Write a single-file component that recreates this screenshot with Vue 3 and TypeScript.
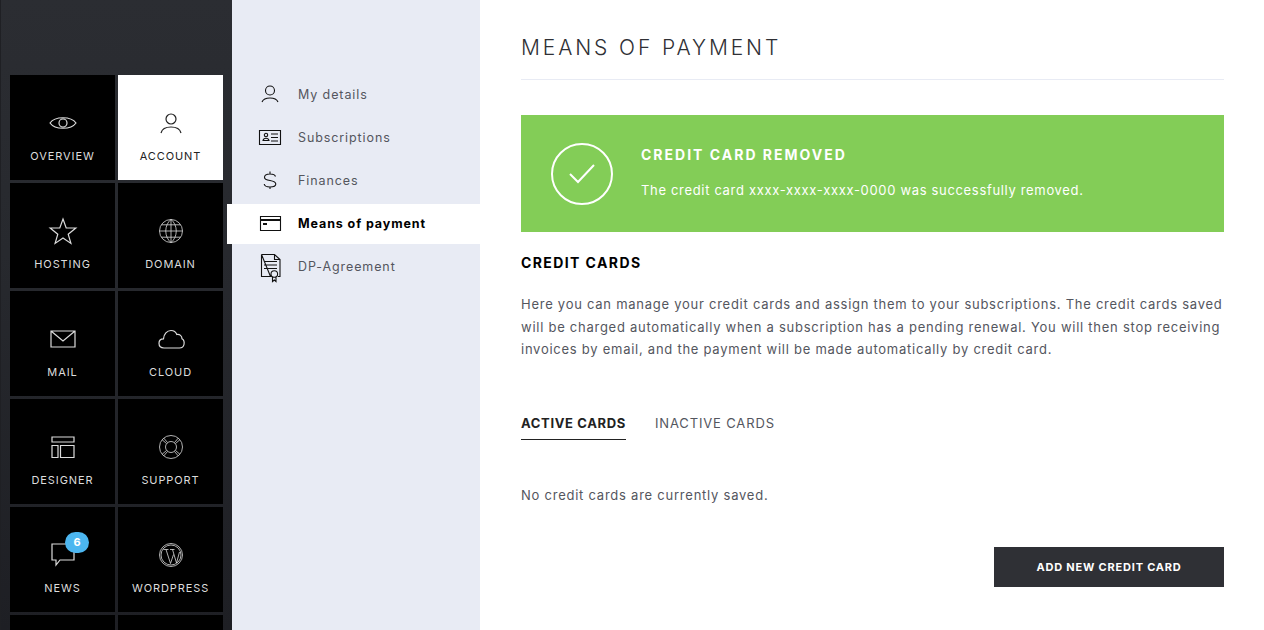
<script setup lang="ts">
type Tile = { label: string; d: string; active?: boolean; badge?: number; thin?: boolean };

const ring = "M26.5 15a11.5 11.5 0 1 1-23 0a11.5 11.5 0 1 1 23 0Z";

const tiles: Tile[] = [
  { label: "OVERVIEW", d: "M2 15C7 8 23 8 28 15C23 22 7 22 2 15ZM19 15a4 4 0 1 1-8 0a4 4 0 1 1 8 0Z" },
  { label: "ACCOUNT", active: true, d: "M20 11a5 5 0 1 1-10 0a5 5 0 1 1 10 0ZM5 25C6 21 10 19 15 19C20 19 24 21 25 25" },
  { label: "HOSTING", d: "M15 3L18.2 12H27.8L20.2 18.2L22.9 27.4L15 22L7.1 27.4L9.8 18.2L2.2 12H11.8Z" },
  { label: "DOMAIN", thin: true, d: ring + "M15 3.5V26.5M3.5 15H26.5M5.5 8.8H24.5M5.5 21.2H24.5M15 3.5C8 9 8 21 15 26.5M15 3.5C22 9 22 21 15 26.5" },
  { label: "MAIL", d: "M3 7H27V23H3ZM3 7L15 17L27 7" },
  { label: "CLOUD", d: "M8 24C5 24 3 22 3 19.300C3 16.500 5 14.800 7.500 14.800C7.800 10 11 6.500 15 6.500C18 6.500 20 8.300 20.800 10.500C23.800 10 26 12 26 14.800C28 16 28.500 18 28 20.500C27.500 22.800 25.800 24 23.500 24Z" },
  { label: "DESIGNER", d: "M4 5H26V10H4ZM4 13.500H10V25.500H4ZM12.500 13.500H26V25.500H12.500Z" },
  { label: "SUPPORT", thin: true, d: ring + "M20.500 15a5.500 5.500 0 1 1-11 0a5.500 5.500 0 1 1 11 0ZM7.800 6.200L11.500 10.500M6.200 7.800L10.500 11.500M22.200 6.200L18.500 10.500M23.800 7.800L19.500 11.500M7.800 23.800L11.500 19.500M6.200 22.200L10.500 18.500M22.200 23.800L18.500 19.500M23.800 22.200L19.500 18.500" },
  { label: "NEWS", badge: 6, d: "M4 4H26V20H12L8 25V20H4Z" },
  { label: "WORDPRESS", thin: true, d: ring + "M25 15a10 10 0 1 1-20 0a10 10 0 1 1 20 0ZM7.500 9.500H12.500M10 9.500L14.500 23.500L17.500 14.500M14 9.500H18.500M16.500 9.500L20.500 23L23.500 12" },
  { label: "", d: "" },
  { label: "", d: "" }
];

const menu = [
  { label: "My details", d: "M19.500 11.500a4.500 4.500 0 1 1-9 0a4.500 4.500 0 1 1 9 0ZM7 23C8 20.500 11 19 15 19C19 19 22 20.500 23 23" },
  { label: "Subscriptions", d: "M4.500 8.500H25.500V22.500H4.500ZM8 18.500C8.300 17 9.500 16.300 11 16.300C12.500 16.300 13.700 17 14 18.500H8ZM12.700 13a1.700 1.700 0 1 1-3.400 0a1.700 1.700 0 1 1 3.400 0ZM16 12H23M16 15.500H23M16 19H23" },
  { label: "Finances", d: "M20.500 11.500C20 9.500 18 9 15 9C12 9 9.500 10.300 9.500 12.300C9.500 14.500 12 15.200 15 15.500C18 16 20.800 17 20.800 19C20.800 21 18 22 15 22C12 22 9.500 21 9.200 19M15 6.500V9M15 22V24" },
  { label: "Means of payment", active: true, d: "M5.500 8.500H25.500V22.500H5.500ZM5.500 11.500H25.500M5.500 12.500H25.500M8 15.500H12M8 16.500H12" },
  { label: "DP-Agreement", d: "M6.500 3.500H19.500L25 8.500V25.500H23M15.500 25.500H6.500V3.500ZM19.500 3.500V8.500H25M9 10.500H22M9 14H22M9 17.500H22M22.600 23a3.300 3.300 0 1 1-6.600 0a3.300 3.300 0 1 1 6.600 0ZM17.500 26V30.500L19.300 29L21 30.500V26" }
];
</script>

<template>
  <div class="layout">
    <aside class="rail">
      <div class="tiles">
        <a
          v-for="tile in tiles"
          :key="tile.label + tile.d"
          class="tile"
          :class="{ 'tile--active': tile.active, 'tile--thin': tile.thin }"
        >
          <span v-if="tile.badge" class="tile__badge">{{ tile.badge }}</span>
          <svg class="tile__icon" viewBox="0 0 30 30" width="30" height="30">
            <path :d="tile.d" />
          </svg>
          <span class="tile__label">{{ tile.label }}</span>
        </a>
      </div>
    </aside>

    <nav class="submenu">
      <a
        v-for="item in menu"
        :key="item.label"
        class="submenu__item"
        :class="{ 'submenu__item--active': item.active }"
      >
        <svg class="submenu__icon" viewBox="0 0 30 30" width="30" height="30">
          <path :d="item.d" />
        </svg>
        {{ item.label }}
      </a>
    </nav>

    <main class="content">
      <h1 class="title">MEANS OF PAYMENT</h1>

      <section class="notice">
        <svg class="notice__icon" viewBox="0 0 62 62" width="62" height="62">
          <circle cx="31" cy="31" r="30" />
          <path d="M19 31L27 39L43 22" />
        </svg>
        <div>
          <h2 class="notice__title">CREDIT CARD REMOVED</h2>
          <p class="notice__text">The credit card xxxx-xxxx-xxxx-0000 was successfully removed.</p>
        </div>
      </section>

      <h2 class="heading">CREDIT CARDS</h2>
      <p class="intro">
        Here you can manage your credit cards and assign them to your subscriptions. The credit cards saved<br />
        will be charged automatically when a subscription has a pending renewal. You will then stop receiving<br />
        invoices by email, and the payment will be made automatically by credit card.
      </p>

      <div class="tabs">
        <a class="tab tab--active">ACTIVE CARDS</a>
        <a class="tab">INACTIVE CARDS</a>
      </div>

      <p class="empty">No credit cards are currently saved.</p>

      <div class="actions">
        <button class="add-button" type="button">ADD NEW CREDIT CARD</button>
      </div>
    </main>
  </div>
</template>

<style scoped>
.layout {
  display: flex;
  height: 630px;
  overflow: hidden;
  font-family: Inter, "Liberation Sans", sans-serif;
  background: #fff;
}

.rail {
  flex: 0 0 232px;
  box-sizing: border-box;
  padding: 75px 9px 0 10px;
  background: linear-gradient(180deg, #2b2d32 0%, #27292e 40%, #1e1f24 100%);
  box-shadow: inset 1px 0 0 #1f2024;
  overflow: hidden;
}

.tiles {
  display: grid;
  grid-template-columns: 105px 105px;
  grid-auto-rows: 105px;
  gap: 3px;
}

.tile {
  position: relative;
  display: flex;
  flex-direction: column;
  align-items: center;
  background: #000;
  color: #dcdcdc;
  padding-top: 33px;
  box-sizing: border-box;
}

.tile--active {
  background: #fff;
  color: #222;
}

.tile__icon {
  fill: none;
  stroke: currentColor;
  stroke-width: 1.2;
}

.tile--thin .tile__icon {
  stroke-width: 0.8;
}

.tile__label {
  margin-top: 11px;
  font-size: 11px;
  line-height: 14px;
  letter-spacing: 0.9px;
}

.tile__badge {
  position: absolute;
  top: 25px;
  left: 55px;
  width: 24px;
  height: 21px;
  border-radius: 11px;
  background: #4cb6f0;
  color: #fff;
  font-size: 11px;
  font-weight: 700;
  line-height: 21px;
  text-align: center;
}

.submenu {
  position: relative;
  flex: 0 0 248px;
  box-sizing: border-box;
  padding-top: 75px;
  background: #e8ebf4;
}

.submenu__item {
  display: flex;
  align-items: center;
  box-sizing: border-box;
  height: 40px;
  margin-bottom: 3px;
  padding: 0 0 2px 23px;
  gap: 13px;
  color: #54565e;
  font-size: 12.5px;
  letter-spacing: 0.9px;
}

.submenu__item--active {
  margin-left: -5px;
  padding-left: 28px;
  background: #fff;
  color: #000;
  font-weight: 700;
}

.submenu__icon {
  flex: none;
  overflow: visible;
  fill: none;
  stroke: #111;
  stroke-width: 1.1;
}

.content {
  flex: 1;
  padding: 0 40px 0 41px;
  color: #54565e;
}

.title {
  margin: 0;
  height: 79px;
  border-bottom: 1px solid #e8ebf4;
  font-size: 21px;
  font-weight: 300;
  line-height: 96px;
  letter-spacing: 2.9px;
  color: #2f3035;
}

.notice {
  display: flex;
  align-items: center;
  box-sizing: border-box;
  gap: 28px;
  height: 117px;
  margin-top: 35px;
  padding: 0 0 2px 30px;
  background: #83cd57;
  color: #fff;
}

.notice__icon {
  flex: none;
  margin-top: 2px;
  fill: none;
  stroke: #fff;
  stroke-width: 2;
}

.notice__title {
  margin: 0;
  font-size: 14px;
  font-weight: 700;
  line-height: 18px;
  letter-spacing: 2px;
}

.notice__text {
  margin: 17px 0 0;
  font-size: 13px;
  line-height: 18px;
  letter-spacing: 0.67px;
}

.heading {
  margin: 22px 0 0;
  color: #000;
  font-size: 14px;
  font-weight: 700;
  line-height: 18px;
  letter-spacing: 1.4px;
}

.intro {
  margin: 21px 0 0;
  font-size: 13px;
  line-height: 22.5px;
  letter-spacing: 0.74px;
}

.tabs {
  display: flex;
  gap: 29px;
  margin-top: 46px;
  font-size: 13px;
  letter-spacing: 0.85px;
}

.tab {
  height: 32px;
  line-height: 33px;
}

.tab--active {
  border-bottom: 1px solid #222;
  color: #222;
  font-weight: 700;
  letter-spacing: 0.65px;
}

.empty {
  margin: 45px 0 0;
  font-size: 13px;
  line-height: 20px;
  letter-spacing: 0.76px;
}

.actions {
  display: flex;
  justify-content: flex-end;
  margin-top: 42px;
}

.add-button {
  width: 230px;
  height: 40px;
  border: none;
  background: #2f3035;
  color: #fff;
  font-family: inherit;
  font-size: 11px;
  font-weight: 700;
  letter-spacing: 0.8px;
}
</style>

<style>
html,
body {
  margin: 0;
  overflow: hidden;
}
</style>
